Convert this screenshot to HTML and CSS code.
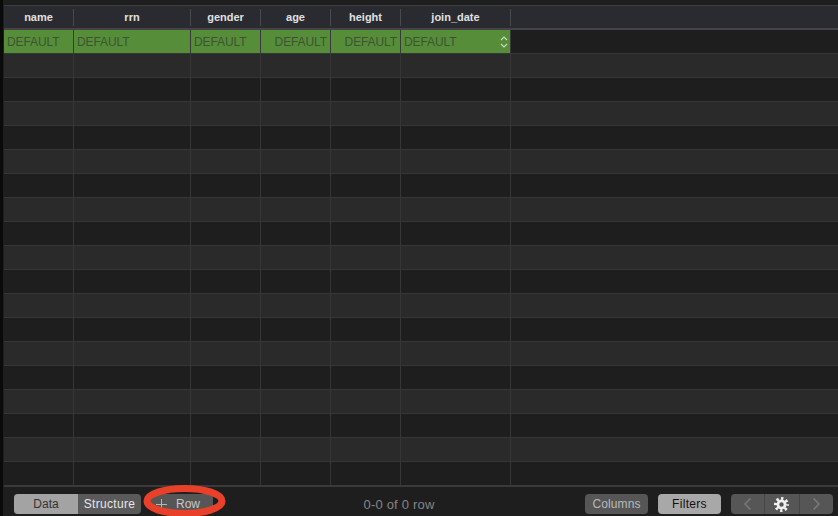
FILE: index.html
```html
<!DOCTYPE html>
<html lang="en">

<head>
    <meta charset="utf-8">
    <title>Table</title>
    <link rel="stylesheet" href="styles.css">
</head>

<body>
    <div class="window">
        <div class="grid">
            <div class="row row--head">
                <div class="cell cell--name">name</div>
                <div class="cell cell--rrn">rrn</div>
                <div class="cell cell--gender">gender</div>
                <div class="cell cell--age">age</div>
                <div class="cell cell--height">height</div>
                <div class="cell cell--date">join_date</div>
                <div class="cell cell--rest"></div>
            </div>
            <div class="row row--new">
                <div class="cell cell--name">DEFAULT</div>
                <div class="cell cell--rrn">DEFAULT</div>
                <div class="cell cell--gender">DEFAULT</div>
                <div class="cell cell--age cell--right">DEFAULT</div>
                <div class="cell cell--height cell--right">DEFAULT</div>
                <div class="cell cell--date">DEFAULT
                    <svg class="stepper" width="8" height="14" viewBox="0 0 8 14" fill="none" stroke="#c9d6c1" stroke-width="1.2">
                        <path d="M1 5 L4 2 L7 5" />
                        <path d="M1 9 L4 12 L7 9" />
                    </svg>
                </div>
                <div class="cell cell--rest"></div>
            </div>
            <div class="row row--odd"><div class="cell cell--name"></div><div class="cell cell--rrn"></div><div class="cell cell--gender"></div><div class="cell cell--age"></div><div class="cell cell--height"></div><div class="cell cell--date"></div><div class="cell cell--rest"></div></div>
            <div class="row"><div class="cell cell--name"></div><div class="cell cell--rrn"></div><div class="cell cell--gender"></div><div class="cell cell--age"></div><div class="cell cell--height"></div><div class="cell cell--date"></div><div class="cell cell--rest"></div></div>
            <div class="row row--odd"><div class="cell cell--name"></div><div class="cell cell--rrn"></div><div class="cell cell--gender"></div><div class="cell cell--age"></div><div class="cell cell--height"></div><div class="cell cell--date"></div><div class="cell cell--rest"></div></div>
            <div class="row"><div class="cell cell--name"></div><div class="cell cell--rrn"></div><div class="cell cell--gender"></div><div class="cell cell--age"></div><div class="cell cell--height"></div><div class="cell cell--date"></div><div class="cell cell--rest"></div></div>
            <div class="row row--odd"><div class="cell cell--name"></div><div class="cell cell--rrn"></div><div class="cell cell--gender"></div><div class="cell cell--age"></div><div class="cell cell--height"></div><div class="cell cell--date"></div><div class="cell cell--rest"></div></div>
            <div class="row"><div class="cell cell--name"></div><div class="cell cell--rrn"></div><div class="cell cell--gender"></div><div class="cell cell--age"></div><div class="cell cell--height"></div><div class="cell cell--date"></div><div class="cell cell--rest"></div></div>
            <div class="row row--odd"><div class="cell cell--name"></div><div class="cell cell--rrn"></div><div class="cell cell--gender"></div><div class="cell cell--age"></div><div class="cell cell--height"></div><div class="cell cell--date"></div><div class="cell cell--rest"></div></div>
            <div class="row"><div class="cell cell--name"></div><div class="cell cell--rrn"></div><div class="cell cell--gender"></div><div class="cell cell--age"></div><div class="cell cell--height"></div><div class="cell cell--date"></div><div class="cell cell--rest"></div></div>
            <div class="row row--odd"><div class="cell cell--name"></div><div class="cell cell--rrn"></div><div class="cell cell--gender"></div><div class="cell cell--age"></div><div class="cell cell--height"></div><div class="cell cell--date"></div><div class="cell cell--rest"></div></div>
            <div class="row"><div class="cell cell--name"></div><div class="cell cell--rrn"></div><div class="cell cell--gender"></div><div class="cell cell--age"></div><div class="cell cell--height"></div><div class="cell cell--date"></div><div class="cell cell--rest"></div></div>
            <div class="row row--odd"><div class="cell cell--name"></div><div class="cell cell--rrn"></div><div class="cell cell--gender"></div><div class="cell cell--age"></div><div class="cell cell--height"></div><div class="cell cell--date"></div><div class="cell cell--rest"></div></div>
            <div class="row"><div class="cell cell--name"></div><div class="cell cell--rrn"></div><div class="cell cell--gender"></div><div class="cell cell--age"></div><div class="cell cell--height"></div><div class="cell cell--date"></div><div class="cell cell--rest"></div></div>
            <div class="row row--odd"><div class="cell cell--name"></div><div class="cell cell--rrn"></div><div class="cell cell--gender"></div><div class="cell cell--age"></div><div class="cell cell--height"></div><div class="cell cell--date"></div><div class="cell cell--rest"></div></div>
            <div class="row"><div class="cell cell--name"></div><div class="cell cell--rrn"></div><div class="cell cell--gender"></div><div class="cell cell--age"></div><div class="cell cell--height"></div><div class="cell cell--date"></div><div class="cell cell--rest"></div></div>
            <div class="row row--odd"><div class="cell cell--name"></div><div class="cell cell--rrn"></div><div class="cell cell--gender"></div><div class="cell cell--age"></div><div class="cell cell--height"></div><div class="cell cell--date"></div><div class="cell cell--rest"></div></div>
            <div class="row"><div class="cell cell--name"></div><div class="cell cell--rrn"></div><div class="cell cell--gender"></div><div class="cell cell--age"></div><div class="cell cell--height"></div><div class="cell cell--date"></div><div class="cell cell--rest"></div></div>
            <div class="row row--odd"><div class="cell cell--name"></div><div class="cell cell--rrn"></div><div class="cell cell--gender"></div><div class="cell cell--age"></div><div class="cell cell--height"></div><div class="cell cell--date"></div><div class="cell cell--rest"></div></div>
            <div class="row"><div class="cell cell--name"></div><div class="cell cell--rrn"></div><div class="cell cell--gender"></div><div class="cell cell--age"></div><div class="cell cell--height"></div><div class="cell cell--date"></div><div class="cell cell--rest"></div></div>
        </div>

        <div class="footer">
            <div class="tabs">
                <div class="tab tab--on">Data</div>
                <div class="tab">Structure</div>
            </div>
            <div class="add-row">
                <svg width="13" height="13" viewBox="0 0 13 13" stroke="#b5b5b5" stroke-width="1">
                    <path d="M6.500 1 V12 M1 6.500 H12" />
                </svg>
                <span>Row</span>
                <!-- red marker ring drawn over the button -->
                <svg class="ring" width="84" height="32" viewBox="0 0 84 32" fill="none">
                    <ellipse cx="41.500" cy="17" rx="37.500" ry="12.500" stroke="#e9402a" stroke-width="7" />
                </svg>
            </div>
            <div class="count">0-0 of 0 row</div>
            <div class="btn">Columns</div>
            <div class="btn btn--on">Filters</div>
            <div class="pager">
                <div class="pager__part">
                    <svg width="9" height="14" viewBox="0 0 9 14" fill="none" stroke="#7c7c7c" stroke-width="1.4"><path d="M7.500 1.500 L2 7 L7.500 12.500" /></svg>
                </div>
                <div class="pager__part pager__part--mid">
                    <svg width="15" height="15" viewBox="-12 -12 24 24">
                        <circle r="8" fill="#f0f0f0" />
                        <circle r="9.500" fill="none" stroke="#f0f0f0" stroke-width="5" stroke-dasharray="3.700 3.760" stroke-dashoffset="1.850" />
                        <circle r="3.500" fill="#565657" />
                    </svg>
                </div>
                <div class="pager__part">
                    <svg width="9" height="14" viewBox="0 0 9 14" fill="none" stroke="#7c7c7c" stroke-width="1.4"><path d="M1.500 1.500 L7 7 L1.500 12.500" /></svg>
                </div>
            </div>
        </div>
    </div>
</body>

</html>
```

FILE: styles.css
```css
*,
*::after,
*::before {
    box-sizing: border-box;
}

html,
body {
    margin: 0;
    height: 100%;
    overflow: hidden;
}

body {
    background-color: #1b1b1c;
    font-family: "Liberation Sans", Arial, sans-serif;
}

.window {
    height: 516px;
    display: flex;
    flex-direction: column;
    padding-left: 1px;
    border-left: 3px solid #0a0a0a;
    background-color: #1e1e1f;
}

.grid {
    flex: 1;
    overflow: hidden;
    padding-top: 5px;
    background-color: #1e1e1f;
}

.row {
    display: flex;
    height: 24px;
    border-bottom: 1px solid #363637;
    background-color: #1e1e1f;
}

.row--odd {
    background-color: #2a2a2b;
}

.row--head {
    height: 25px;
    align-items: stretch;
    background-color: #2a2b30;
    border-top: 1px solid #3d3d3f;
    border-bottom: 2px solid #444446;
    color: #e0e0e0;
    font-size: 11px;
    font-weight: bold;
}

.row--head .cell {
    justify-content: center;
    margin: 3px 0 2px;
    padding-bottom: 2px;
    border-right-color: #4a4a4d;
}

.row--new .cell {
    padding: 0 3px;
    background-color: #568d39;
    color: #3d5433;
    font-size: 12px;
    letter-spacing: -0.1px;
    border-right-color: #3a3a3b;
}

.row--new .cell--rest {
    background-color: #1e1e1f;
}

.cell {
    display: flex;
    align-items: center;
    border-right: 1px solid #363637;
}

.row--new .cell--right {
    justify-content: flex-end;
}

.cell--name {
    width: 70px;
}

.cell--rrn {
    width: 117px;
}

.cell--gender {
    width: 70px;
}

.cell--age {
    width: 70px;
}

.cell--height {
    width: 70px;
}

.cell--date {
    width: 110px;
    position: relative;
}

.cell--rest {
    flex: 1;
    border-right: 0;
}

.stepper {
    position: absolute;
    right: 2px;
    top: 5px;
}

.footer {
    height: 31px;
    flex-shrink: 0;
    display: flex;
    align-items: flex-start;
    padding: 7px 5px 0 10px;
    border-top: 2px solid #3a3a3b;
    background-color: #1e1e1f;
    font-size: 12px;
    color: #d4d4d4;
}

.tabs {
    display: flex;
    height: 20px;
    border-radius: 4px;
    overflow: hidden;
    background-color: #5a5a5b;
}

.tab {
    display: flex;
    align-items: center;
    justify-content: center;
    width: 63px;
    color: #e6e6e6;
    letter-spacing: 0.3px;
}

.tab--on {
    width: 64px;
    background-color: #a3a3a3;
    color: #333;
    letter-spacing: 0;
}

.add-row {
    position: relative;
    width: 64px;
    height: 20px;
    margin-left: 8px;
    display: flex;
    align-items: center;
    gap: 8px;
    padding-left: 6px;
    border-radius: 4px 4px 4px 12px;
    background-color: #565657;
    color: #c8c8c8;
}

.ring {
    position: absolute;
    left: -6px;
    top: -10px;
}

.count {
    flex: 1;
    height: 20px;
    line-height: 22px;
    text-align: center;
    color: #858585;
    font-size: 13px;
    letter-spacing: 0.2px;
}

.btn {
    width: 63px;
    height: 20px;
    margin-right: 10px;
    display: flex;
    align-items: center;
    justify-content: center;
    border-radius: 4px;
    background-color: #565657;
    color: #b9b9b9;
    letter-spacing: 0.1px;
}

.btn--on {
    background-color: #a8a8a8;
    color: #111;
    letter-spacing: 0.3px;
}

.pager {
    width: 102px;
    height: 20px;
    display: flex;
    border-radius: 4px;
    overflow: hidden;
    background-color: #565657;
}

.pager__part {
    flex: 1;
    display: flex;
    align-items: center;
    justify-content: center;
}

.pager__part--mid {
    border-left: 1px solid #454546;
    border-right: 1px solid #454546;
}
```
